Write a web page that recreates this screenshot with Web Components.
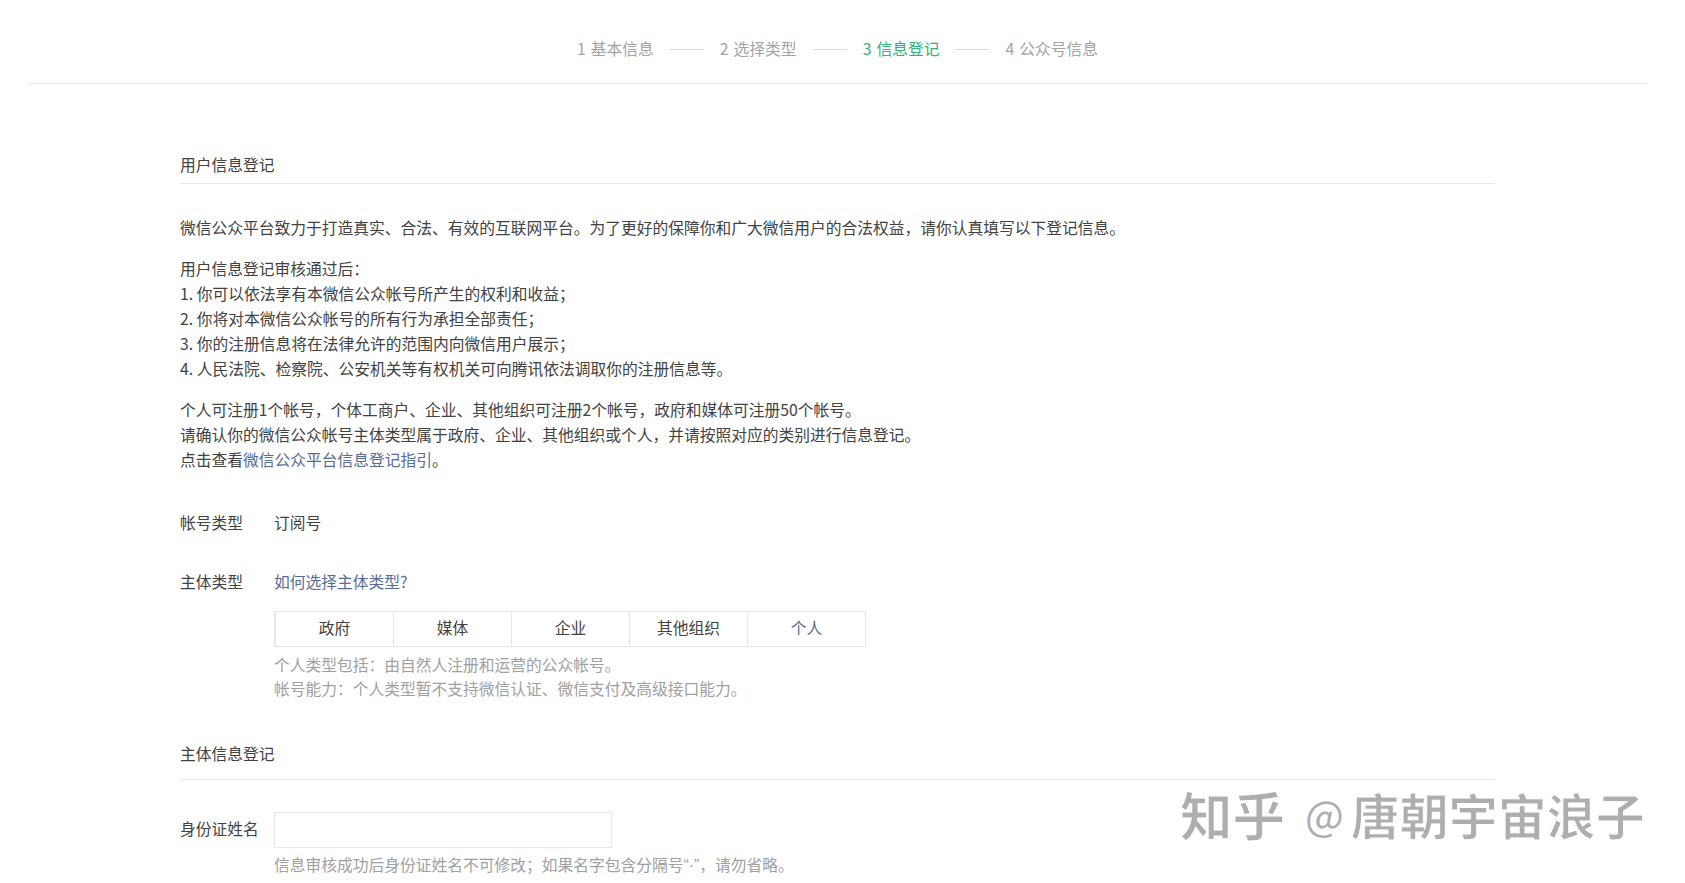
<!DOCTYPE html>
<html lang="zh-CN">
<head>
<meta charset="utf-8">
<title>信息登记</title>
<style>
  html, body { margin: 0; background: #fff; }
  body {
    font: 15.75px/25px "Noto Sans CJK SC", "Liberation Sans", sans-serif;
    color: #424242;
    height: 883px;
    overflow: hidden;
    position: relative;
  }
  a { color: #576b95; text-decoration: none; }
  .latin { font-family: "Liberation Sans", sans-serif; }
</style>
</head>
<body>
<step-bar current="3" steps="基本信息,选择类型,信息登记,公众号信息"></step-bar>
<page-main>
  <section-title gap="6">用户信息登记</section-title>
  <info-block top="31">微信公众平台致力于打造真实、合法、有效的互联网平台。为了更好的保障你和广大微信用户的合法权益&#xFF0C;请你认真填写以下登记信息。</info-block>
  <info-block top="16">用户信息登记审核通过后&#xFF1A;<br>1. 你可以依法享有本微信公众帐号所产生的权利和收益&#xFF1B;<br>2. 你将对本微信公众帐号的所有行为承担全部责任&#xFF1B;<br>3. 你的注册信息将在法律允许的范围内向微信用户展示&#xFF1B;<br>4. 人民法院、检察院、公安机关等有权机关可向腾讯依法调取你的注册信息等。</info-block>
  <info-block top="16">个人可注册1个帐号&#xFF0C;个体工商户、企业、其他组织可注册2个帐号&#xFF0C;政府和媒体可注册50个帐号。<br>请确认你的微信公众帐号主体类型属于政府、企业、其他组织或个人&#xFF0C;并请按照对应的类别进行信息登记。<br>点击查看<a href="#">微信公众平台信息登记指引</a>。</info-block>
  <form-row label="帐号类型" top="38">订阅号</form-row>
  <form-row label="主体类型" top="34">
    <a href="#">如何选择主体类型?</a>
    <type-tabs top="17" selected="个人" items="政府,媒体,企业,其他组织,个人"></type-tabs>
    <tip-text top="5.5">个人类型包括&#xFF1A;由自然人注册和运营的公众帐号。<br>帐号能力&#xFF1A;个人类型暂不支持微信认证、微信支付及高级接口能力。</tip-text>
  </form-row>
  <section-title top="40.5" gap="13">主体信息登记</section-title>
  <form-row label="身份证姓名" top="32" center>
    <text-box></text-box>
  </form-row>
  <form-row top="5">
    <tip-text>信息审核成功后身份证姓名不可修改&#xFF1B;如果名字包含分隔号<span class="latin">“·”</span>&#xFF0C;请勿省略。</tip-text>
  </form-row>
</page-main>
<zh-watermark brand="知乎" author="唐朝宇宙浪子"></zh-watermark>

<script>
  class StepBar extends HTMLElement {
    constructor() {
      super();
      this.shadowDOM = this.attachShadow({ mode: "open" });
    }

    connectedCallback() {
      const current = Number(this.getAttribute("current"));
      const steps = this.getAttribute("steps").split(",");
      const items = steps.map((name, i) => {
        const cls = i + 1 === current ? "step on" : "step";
        const dash = i < steps.length - 1 ? '<i class="dash"></i>' : "";
        return `<span class="${cls}">${i + 1} ${name}</span>${dash}`;
      });
      this.shadowDOM.innerHTML = `
        <style>
          :host {
            display: flex;
            justify-content: center;
            align-items: flex-start;
            gap: 16px;
            height: 69px;
            padding-top: 14px;
            margin: 0 38px 0 28px;
            border-bottom: 1px solid #e7e7eb;
            color: #a3a3a3;
          }
          .step { margin-top: 22px; white-space: nowrap; word-spacing: 1.5px; }
          .on { color: #35b077; }
          .dash { width: 34px; height: 1px; background: #dcdcdc; margin-top: 35px; }
        </style>
        ${items.join("")}
      `;
    }
  }

  class PageMain extends HTMLElement {
    constructor() {
      super();
      this.shadowDOM = this.attachShadow({ mode: "open" });
      this.shadowDOM.innerHTML = `
        <style>
          :host { display: block; padding: 68px 190px 0 180px; }
        </style>
        <slot></slot>
      `;
    }
  }

  class SectionTitle extends HTMLElement {
    constructor() {
      super();
      this.shadowDOM = this.attachShadow({ mode: "open" });
    }

    connectedCallback() {
      this.shadowDOM.innerHTML = `
        <style>
          :host {
            display: block;
            margin-top: ${this.getAttribute("top") || 0}px;
            padding-bottom: ${this.getAttribute("gap") || 6}px;
            border-bottom: 1px solid #e7e7eb;
          }
        </style>
        <slot></slot>
      `;
    }
  }

  class InfoBlock extends HTMLElement {
    constructor() {
      super();
      this.shadowDOM = this.attachShadow({ mode: "open" });
    }

    connectedCallback() {
      this.shadowDOM.innerHTML = `
        <style>
          :host { display: block; margin-top: ${this.getAttribute("top") || 0}px; }
        </style>
        <slot></slot>
      `;
    }
  }

  class FormRow extends HTMLElement {
    constructor() {
      super();
      this.shadowDOM = this.attachShadow({ mode: "open" });
    }

    connectedCallback() {
      const centered = this.hasAttribute("center");
      this.shadowDOM.innerHTML = `
        <style>
          :host {
            display: grid;
            grid-template-columns: 94px 1fr;
            align-items: ${centered ? "center" : "flex-start"};
            margin-top: ${this.getAttribute("top") || 0}px;
          }
          .label { margin-top: ${centered ? -3 : 0}px; }
        </style>
        <div class="label">${this.getAttribute("label") || ""}</div>
        <div class="body"><slot></slot></div>
      `;
    }
  }

  class TypeTabs extends HTMLElement {
    constructor() {
      super();
      this.shadowDOM = this.attachShadow({ mode: "open" });
    }

    connectedCallback() {
      const selected = this.getAttribute("selected");
      const cells = this.getAttribute("items").split(",").map((item) => {
        return `<span class="${item === selected ? "cell on" : "cell"}">${item}</span>`;
      });
      this.shadowDOM.innerHTML = `
        <style>
          :host {
            display: grid;
            grid-template-columns: repeat(5, 1fr);
            width: 592px;
            box-sizing: border-box;
            margin-top: ${this.getAttribute("top") || 0}px;
            border: 1px solid #e7e7eb;
          }
          .cell {
            height: 34px;
            line-height: 32px;
            text-align: center;
            border-left: 1px solid #e7e7eb;
          }
          .cell:first-child { border-left: 0; }
          .on { color: #576b95; }
        </style>
        ${cells.join("")}
      `;
    }
  }

  class TipText extends HTMLElement {
    constructor() {
      super();
      this.shadowDOM = this.attachShadow({ mode: "open" });
    }

    connectedCallback() {
      this.shadowDOM.innerHTML = `
        <style>
          :host {
            display: block;
            color: #a0a0a0;
            line-height: 24px;
            margin-top: ${this.getAttribute("top") || 0}px;
          }
        </style>
        <slot></slot>
      `;
    }
  }

  class TextBox extends HTMLElement {
    constructor() {
      super();
      this.shadowDOM = this.attachShadow({ mode: "open" });
      this.shadowDOM.innerHTML = `
        <style>
          :host { display: block; width: 338px; height: 36px; }
          input {
            display: block;
            width: 100%;
            height: 100%;
            box-sizing: border-box;
            border: 1px solid #e7e7eb;
            outline: 0;
            background: #fff;
            font: inherit;
          }
        </style>
        <input type="text">
      `;
    }
  }

  class ZhWatermark extends HTMLElement {
    constructor() {
      super();
      this.shadowDOM = this.attachShadow({ mode: "open" });
    }

    connectedCallback() {
      this.shadowDOM.innerHTML = `
        <style>
          :host {
            position: absolute;
            left: 1180px;
            top: 777px;
            display: flex;
            align-items: center;
            height: 72px;
            font-weight: 700;
            color: #aeaeae;
            -webkit-text-stroke: 1px #fff;
            white-space: nowrap;
          }
          .brand { font-size: 52.5px; }
          .at { font-size: 41px; margin: 0 7px 0 20px; font-weight: 400; -webkit-text-stroke: 0; }
          .author { font-size: 49px; }
        </style>
        <span class="brand">${this.getAttribute("brand")}</span>
        <span class="at">@</span>
        <span class="author">${this.getAttribute("author")}</span>
      `;
    }
  }

  customElements.define("step-bar", StepBar);
  customElements.define("page-main", PageMain);
  customElements.define("section-title", SectionTitle);
  customElements.define("info-block", InfoBlock);
  customElements.define("form-row", FormRow);
  customElements.define("type-tabs", TypeTabs);
  customElements.define("tip-text", TipText);
  customElements.define("text-box", TextBox);
  customElements.define("zh-watermark", ZhWatermark);
</script>
</body>
</html>
